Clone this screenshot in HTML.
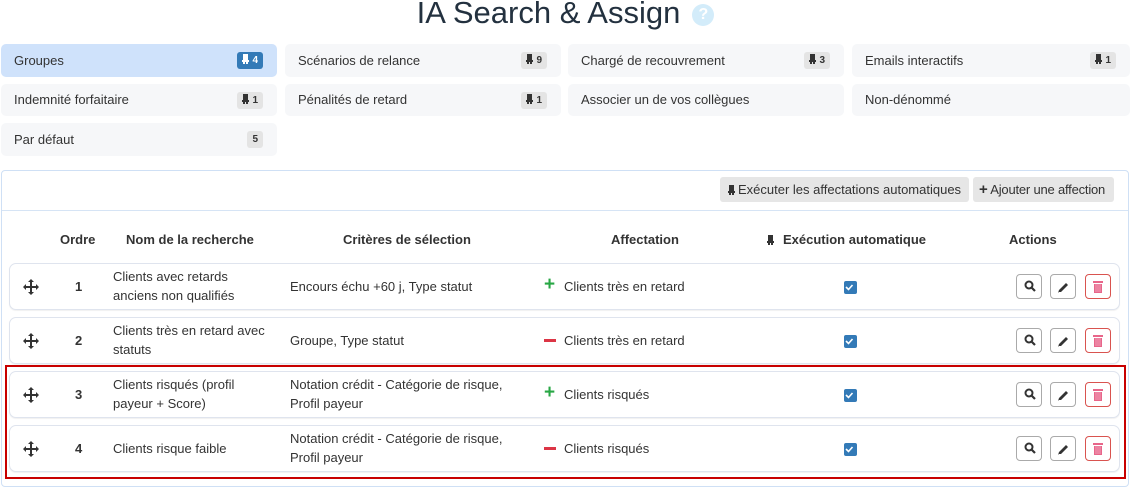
<!DOCTYPE html>
<html><head><meta charset="utf-8"><style>
*{box-sizing:border-box;margin:0;padding:0}
body{width:1131px;height:489px;background:#fff;font-family:"Liberation Sans",sans-serif;font-size:13px;color:#333;position:relative;overflow:hidden}
.a{position:absolute}
.title{left:0;width:1131px;top:-5px;text-align:center;font-size:31px;color:#23313f;font-family:"Liberation Sans",sans-serif;white-space:nowrap}
.q{display:inline-block;width:22px;height:22px;border-radius:50%;background:#d3ecfa;color:#fff;font-size:16px;font-weight:bold;line-height:22px;text-align:center;vertical-align:4px;margin-left:12px}
.card{background:#f6f7f9;border-radius:5px;height:33px;padding:0 13px;line-height:33px;width:276px;white-space:nowrap}
.card.on{background:#cfe2fb}
.badge{position:absolute;right:14px;top:8px;height:17px;line-height:17px;background:#e4e4e4;border-radius:3px;padding:0 5px;font-size:10px;font-weight:bold;color:#333}
.on .badge{background:#337ab7;color:#fff}
.rb{display:inline-block;width:7px;height:10px;vertical-align:-1px;margin-right:3px}
.panel{left:1px;top:170px;width:1128px;height:317px;border:1px solid #cfe0f5;border-radius:4px}
.btn{background:#e6e6e6;border-radius:3px;height:25px;line-height:25px;padding:0 8px;font-size:13px;color:#333;white-space:nowrap}
.th{top:232px;font-weight:bold;font-size:13px;color:#333;white-space:nowrap}
.row{left:9px;width:1111px;height:47px;border:1px solid #dfe4ee;border-radius:7px;background:#fff;box-shadow:0 1px 1px rgba(0,0,0,.06)}
.c{position:absolute;line-height:19px;white-space:nowrap}
.chk{position:absolute;left:834px;width:13px;height:13px;border-radius:2px;background:#337ab7}
.ib{position:absolute;width:26px;height:25px;border:1px solid #aaa;border-radius:4px;background:#fff}
</style></head><body>
<div class="a title">IA Search &amp; Assign<span class="q">?</span></div>

<div class="a card on" style="left:1px;top:44px">Groupes<span class="badge"><svg class="rb" viewBox="0 0 7 10"><rect x="1" y="0" width="5" height="6" fill="#fff"/><rect x="0" y="6" width="7" height="2" fill="#fff"/><rect x="1" y="8" width="2" height="2" fill="#fff"/><rect x="4" y="8" width="2" height="2" fill="#fff"/></svg>4</span></div>
<div class="a card" style="left:285px;top:44px">Scénarios de relance<span class="badge"><svg class="rb" viewBox="0 0 7 10"><rect x="1" y="0" width="5" height="6" fill="#333"/><rect x="0" y="6" width="7" height="2" fill="#333"/><rect x="1" y="8" width="2" height="2" fill="#333"/><rect x="4" y="8" width="2" height="2" fill="#333"/></svg>9</span></div>
<div class="a card" style="left:568px;top:44px">Chargé de recouvrement<span class="badge"><svg class="rb" viewBox="0 0 7 10"><rect x="1" y="0" width="5" height="6" fill="#333"/><rect x="0" y="6" width="7" height="2" fill="#333"/><rect x="1" y="8" width="2" height="2" fill="#333"/><rect x="4" y="8" width="2" height="2" fill="#333"/></svg>3</span></div>
<div class="a card" style="left:852px;top:44px;width:278px">Emails interactifs<span class="badge"><svg class="rb" viewBox="0 0 7 10"><rect x="1" y="0" width="5" height="6" fill="#333"/><rect x="0" y="6" width="7" height="2" fill="#333"/><rect x="1" y="8" width="2" height="2" fill="#333"/><rect x="4" y="8" width="2" height="2" fill="#333"/></svg>1</span></div>

<div class="a card" style="left:1px;top:84px;height:32px;line-height:32px">Indemnité forfaitaire<span class="badge"><svg class="rb" viewBox="0 0 7 10"><rect x="1" y="0" width="5" height="6" fill="#333"/><rect x="0" y="6" width="7" height="2" fill="#333"/><rect x="1" y="8" width="2" height="2" fill="#333"/><rect x="4" y="8" width="2" height="2" fill="#333"/></svg>1</span></div>
<div class="a card" style="left:285px;top:84px;height:32px;line-height:32px">Pénalités de retard<span class="badge"><svg class="rb" viewBox="0 0 7 10"><rect x="1" y="0" width="5" height="6" fill="#333"/><rect x="0" y="6" width="7" height="2" fill="#333"/><rect x="1" y="8" width="2" height="2" fill="#333"/><rect x="4" y="8" width="2" height="2" fill="#333"/></svg>1</span></div>
<div class="a card" style="left:568px;top:84px;height:32px;line-height:32px">Associer un de vos collègues</div>
<div class="a card" style="left:852px;top:84px;height:32px;line-height:32px;width:278px">Non-dénommé</div>

<div class="a card" style="left:1px;top:123px">Par défaut<span class="badge">5</span></div>

<div class="a panel"></div>
<div class="a" style="left:2px;top:210px;width:1126px;height:1px;background:#d6e4f5"></div>
<div class="a btn" style="left:720px;top:177px"><svg class="rb" viewBox="0 0 7 10"><rect x="1" y="0" width="5" height="6" fill="#333"/><rect x="0" y="6" width="7" height="2" fill="#333"/><rect x="1" y="8" width="2" height="2" fill="#333"/><rect x="4" y="8" width="2" height="2" fill="#333"/></svg>Exécuter les affectations automatiques</div>
<div class="a btn" style="left:973px;top:177px;width:141px;padding:0 6px;letter-spacing:-0.2px"><b style="font-size:15px">+</b> Ajouter une affection</div>

<div class="a th" style="left:60px">Ordre</div>
<div class="a th" style="left:126px">Nom de la recherche</div>
<div class="a th" style="left:343px">Critères de sélection</div>
<div class="a th" style="left:611px">Affectation</div>
<div class="a th" style="left:767px"><svg class="rb" viewBox="0 0 7 10" style="margin-right:9px"><rect x="1" y="0" width="5" height="6" fill="#333"/><rect x="0" y="6" width="7" height="2" fill="#333"/><rect x="1" y="8" width="2" height="2" fill="#333"/><rect x="4" y="8" width="2" height="2" fill="#333"/></svg>Exécution automatique</div>
<div class="a th" style="left:1009px">Actions</div>

<div class="a row" style="top:263px">
<svg class="c" style="left:13px;top:15px" width="16" height="16" viewBox="0 0 16 16"><path d="M8 0L5 3h2v4H3V5L0 8l3 3V9h4v4H5l3 3 3-3H9V9h4v2l3-3-3-3v2H9V3h2z" fill="#333"/></svg>
<div class="c" style="left:65px;top:13px;font-weight:bold">1</div>
<div class="c" style="left:103px;top:3px">Clients avec retards<br>anciens non qualifiés</div>
<div class="c" style="left:280px;top:13px">Encours échu +60 j, Type statut</div>
<div class="c" style="left:534px;top:11px;color:#28a745;font-size:19px;font-weight:bold">+</div>
<div class="c" style="left:554px;top:13px">Clients très en retard</div>
<div class="chk" style="top:17px"></div>
<div class="ib" style="left:1006px;top:10px"></div><div class="ib" style="left:1040px;top:10px"></div><div class="ib" style="left:1075px;top:10px;border-color:#d9534f"></div>
</div>
<div class="a row" style="top:317px">
<svg class="c" style="left:13px;top:15px" width="16" height="16" viewBox="0 0 16 16"><path d="M8 0L5 3h2v4H3V5L0 8l3 3V9h4v4H5l3 3 3-3H9V9h4v2l3-3-3-3v2H9V3h2z" fill="#333"/></svg>
<div class="c" style="left:65px;top:13px;font-weight:bold">2</div>
<div class="c" style="left:103px;top:3px">Clients très en retard avec<br>statuts</div>
<div class="c" style="left:280px;top:13px">Groupe, Type statut</div>
<div class="c" style="left:534px;top:21px;width:12px;height:3px;background:#dc3545"></div>
<div class="c" style="left:554px;top:13px">Clients très en retard</div>
<div class="chk" style="top:17px"></div>
<div class="ib" style="left:1006px;top:10px"></div><div class="ib" style="left:1040px;top:10px"></div><div class="ib" style="left:1075px;top:10px;border-color:#d9534f"></div>
</div>
<div class="a row" style="top:371px">
<svg class="c" style="left:13px;top:15px" width="16" height="16" viewBox="0 0 16 16"><path d="M8 0L5 3h2v4H3V5L0 8l3 3V9h4v4H5l3 3 3-3H9V9h4v2l3-3-3-3v2H9V3h2z" fill="#333"/></svg>
<div class="c" style="left:65px;top:13px;font-weight:bold">3</div>
<div class="c" style="left:103px;top:3px">Clients risqués (profil<br>payeur + Score)</div>
<div class="c" style="left:280px;top:3px">Notation crédit - Catégorie de risque,<br>Profil payeur</div>
<div class="c" style="left:534px;top:11px;color:#28a745;font-size:19px;font-weight:bold">+</div>
<div class="c" style="left:554px;top:13px">Clients risqués</div>
<div class="chk" style="top:17px"></div>
<div class="ib" style="left:1006px;top:10px"></div><div class="ib" style="left:1040px;top:10px"></div><div class="ib" style="left:1075px;top:10px;border-color:#d9534f"></div>
</div>
<div class="a row" style="top:425px">
<svg class="c" style="left:13px;top:15px" width="16" height="16" viewBox="0 0 16 16"><path d="M8 0L5 3h2v4H3V5L0 8l3 3V9h4v4H5l3 3 3-3H9V9h4v2l3-3-3-3v2H9V3h2z" fill="#333"/></svg>
<div class="c" style="left:65px;top:13px;font-weight:bold">4</div>
<div class="c" style="left:103px;top:13px">Clients risque faible</div>
<div class="c" style="left:280px;top:3px">Notation crédit - Catégorie de risque,<br>Profil payeur</div>
<div class="c" style="left:534px;top:21px;width:12px;height:3px;background:#dc3545"></div>
<div class="c" style="left:554px;top:13px">Clients risqués</div>
<div class="chk" style="top:17px"></div>
<div class="ib" style="left:1006px;top:10px"></div><div class="ib" style="left:1040px;top:10px"></div><div class="ib" style="left:1075px;top:10px;border-color:#d9534f"></div>
</div>

<svg class="a" style="left:0;top:0" width="1131" height="489">
<defs>
<g id="s"><circle cx="0" cy="0" r="3.5" fill="none" stroke="#333" stroke-width="2"/><path d="M2.5 2.5L6 6" stroke="#333" stroke-width="2.2"/></g>
<g id="p"><path d="M-4 5L-5 6L-4 3L3 -4L5 -2L-2 5Z" fill="#333"/></g>
<g id="t"><rect x="-5" y="-6" width="10" height="2" fill="#e8668a"/><rect x="-4" y="-3" width="8" height="9" fill="#e8668a"/><path d="M-2 -3v8M0 -3v8M2 -3v8" stroke="#f3b0c5" stroke-width=".8"/></g>
</defs>
<use href="#s" x="1029" y="285"/><use href="#p" x="1063" y="287"/><use href="#t" x="1098" y="287"/>
<use href="#s" x="1029" y="339"/><use href="#p" x="1063" y="341"/><use href="#t" x="1098" y="341"/>
<use href="#s" x="1029" y="393"/><use href="#p" x="1063" y="395"/><use href="#t" x="1098" y="395"/>
<use href="#s" x="1029" y="447"/><use href="#p" x="1063" y="449"/><use href="#t" x="1098" y="449"/>
<g fill="none" stroke="#fff" stroke-width="1.6">
<path d="M846 287l2.5 2.5 4-4.5"/><path d="M846 341l2.5 2.5 4-4.5"/><path d="M846 395l2.5 2.5 4-4.5"/><path d="M846 449l2.5 2.5 4-4.5"/>
</g>
</svg>

<div class="a" style="left:5px;top:365px;width:1121px;height:114px;border:2px solid #c80000"></div>
</body></html>
